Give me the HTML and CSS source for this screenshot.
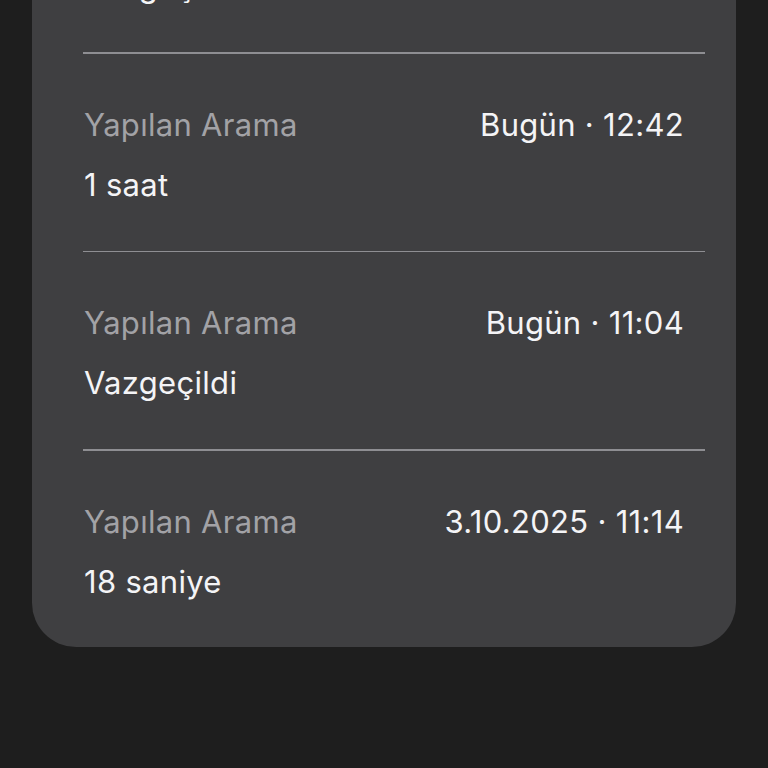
FILE: index.html
```html
<!DOCTYPE html>
<html lang="tr">
<head>
<meta charset="utf-8">
<title>Arama Geçmişi</title>
<link rel="stylesheet" href="styles.css">
</head>
<body>
<div class="screen">
  <section class="card">
    <div class="row">
      <div class="line">
        <span class="label">Yapılan Arama</span>
        <span class="time">Bugün · 13:10</span>
      </div>
      <div class="value">Vazgeçildi</div>
    </div>
    <div class="sep"></div>
    <div class="row">
      <div class="line">
        <span class="label">Yapılan Arama</span>
        <span class="time">Bugün · 12:42</span>
      </div>
      <div class="value">1 saat</div>
    </div>
    <div class="sep"></div>
    <div class="row">
      <div class="line">
        <span class="label">Yapılan Arama</span>
        <span class="time">Bugün · 11:04</span>
      </div>
      <div class="value">Vazgeçildi</div>
    </div>
    <div class="sep"></div>
    <div class="row">
      <div class="line">
        <span class="label">Yapılan Arama</span>
        <span class="time">3.10.2025 · 11:14</span>
      </div>
      <div class="value">18 saniye</div>
    </div>
  </section>
</div>
</body>
</html>
```
FILE: styles.css
```css
html, body {
  margin: 0;
  padding: 0;
  background: #1e1e1e;
}
body {
  width: 768px;
  height: 768px;
  overflow: hidden;
  font-family: "Inter", "Liberation Sans", sans-serif;
  -webkit-font-smoothing: antialiased;
}
.screen {
  padding: 0 32px;
}
.card {
  margin-top: -145px;
  background: #3f3f41;
  border-radius: 44px;
  padding-bottom: 47px;
}
.row {
  padding: 53px 52px 0 52px;
  display: flex;
  flex-direction: column;
  gap: 24px;
}
.sep {
  height: 1.5px;
  background: #8e8e92;
  margin: 48px 31px 0 51px;
}
.line {
  display: flex;
  justify-content: space-between;
  align-items: baseline;
}
.label,
.time,
.value {
  font-size: 31px;
  line-height: 36px;
  letter-spacing: 0.3px;
}
.label {
  color: #a2a2a6;
}
.time {
  color: #f4f4f6;
}
.value {
  color: #f4f4f6;
}
```
